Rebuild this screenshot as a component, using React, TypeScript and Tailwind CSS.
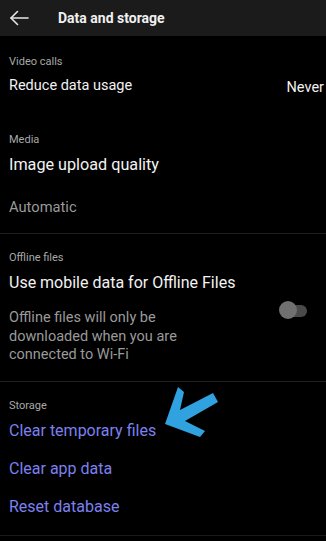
import React from "react";

const font = { fontFamily: "Roboto, 'Noto Sans', sans-serif" };

function Label({ children, className = "" }: { children: React.ReactNode; className?: string }) {
  return <div className={`text-[11px] leading-[14px] text-[#a8a8a8] ${className}`}>{children}</div>;
}

export default function App() {
  return (
    <div className="relative w-[326px] h-[541px] overflow-hidden bg-black text-white" style={font}>
      {/* Header */}
      <div className="flex h-[36px] items-center bg-[#1b1b1b]">
        <svg width="20" height="16" viewBox="0 0 20 16" className="ml-[9px]" fill="none" stroke="#e6e6e6" strokeWidth="1.6" strokeLinecap="round" strokeLinejoin="round">
          <path d="M19 8H2" />
          <path d="M8.5 1.5L2 8l6.5 6.5" />
        </svg>
        <div className="ml-[29px] text-[14px] font-bold text-[#f0f0f0]">Data and storage</div>
      </div>

      {/* Video calls + Media */}
      <div className="px-[9px] pt-[19px]">
        <Label>Video calls</Label>
        <div className="mt-[7px] flex h-[20px] items-center whitespace-nowrap">
          <div className="text-[14.5px] leading-[20px] text-[#f2f2f2]">Reduce data usage</div>
          <div className="ml-auto mr-[-7px] pt-[4px] text-[14.5px] leading-[20px] text-[#f2f2f2]">Never</div>
        </div>
        <Label className="mt-[37px]">Media</Label>
        <div className="mt-[7px] text-[16.2px] leading-[22px] text-[#f2f2f2]">Image upload quality</div>
        <div className="mt-[21px] text-[14.7px] leading-[20px] text-[#9a9a9a]">Automatic</div>
      </div>

      <div className="mt-[16px] h-px bg-[#1f1f1f]" />

      {/* Offline files */}
      <div className="px-[9px] pt-[17px]">
        <Label>Offline files</Label>
        <div className="mt-[7px] text-[16px] leading-[22px] text-[#f2f2f2]">Use mobile data for Offline Files</div>
        <div className="mt-[15px] flex items-start">
          <div className="w-[200px] text-[14.5px] leading-[18.5px] text-[#9a9a9a]">
            Offline files will only be downloaded when you are connected to Wi-Fi
          </div>
          <div className="relative ml-auto mr-[10px] mt-[-8px] h-[18px] w-[28px]">
            <div className="absolute left-[2px] right-0 top-[4px] h-[12px] rounded-full bg-[#4a4a4a]" />
            <div className="absolute left-0 top-0 h-[18px] w-[18px] rounded-full bg-[#707070]" />
          </div>
        </div>
      </div>

      <div className="mt-[16px] h-px bg-[#1f1f1f]" />

      {/* Storage */}
      <div className="px-[9px] pt-[17px] text-[#7c80f0]">
        <Label>Storage</Label>
        <div className="mt-[7px] text-[16px] leading-[22px]">Clear temporary files</div>
        <div className="mt-[16px] text-[16px] leading-[22px]">Clear app data</div>
        <div className="mt-[16px] text-[16px] leading-[22px]">Reset database</div>
      </div>

      <div className="mt-[17px] h-px bg-[#1a1a1a]" />

      {/* Annotation arrow */}
      <svg className="absolute left-0 top-0" width="326" height="541" viewBox="0 0 326 541">
        <polygon
          points="165,424 178,387 184,392 180,410 213,393 218,402 185,421 205,431 200,437"
          fill="#2fa2df"
        />
      </svg>
    </div>
  );
}
